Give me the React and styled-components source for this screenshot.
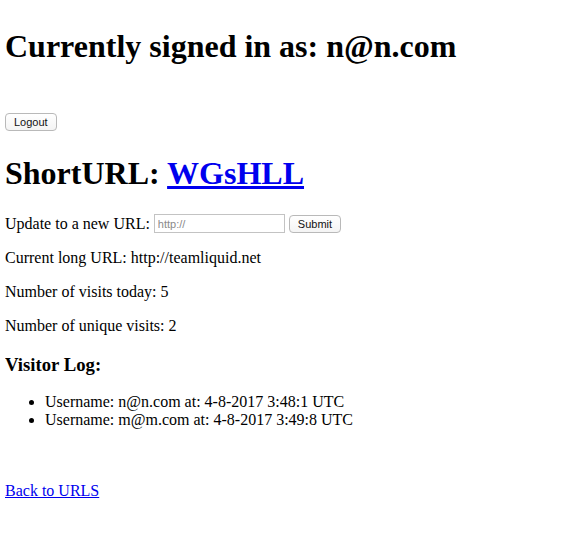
import React from 'react';
import styled, { createGlobalStyle } from 'styled-components';

const GlobalStyle = createGlobalStyle`
  body {
    margin: 7px 5px;
    background: #fff;
    color: #000;
    font-family: "Liberation Serif", "Times New Roman", serif;
    font-size: 16px;
  }
`;

const Title = styled.h1`
  font-size: 32px;
  font-weight: bold;
  margin: 21px 0;
  line-height: 37px;
`;

const LogoutForm = styled.form`
  margin: 0;
  padding: 26px 0 3px;
`;

const Button = styled.button`
  font-family: "Liberation Sans", Arial, sans-serif;
  font-size: 11px;
  height: 18px;
  padding: 0 8px;
  background: linear-gradient(#fff, #f4f4f4);
  border: 1px solid #b9b9b9;
  border-radius: 4px;
  color: #111;
  line-height: 14px;
  vertical-align: middle;
`;

const LinkText = styled.a`
  color: #0000ee;
  text-decoration: underline;
`;

const UpdateForm = styled.form`
  margin: 22px 0 16px;
  display: flex;
  align-items: center;
  gap: 4px;
  line-height: 18px;
`;

const UrlInput = styled.input`
  width: 131px;
  height: 19px;
  box-sizing: border-box;
  border: 1px solid #c3c3c3;
  padding: 1px 3px;
  font-family: "Liberation Sans", Arial, sans-serif;
  font-size: 11px;
  margin: 0;
  &::placeholder {
    color: #8a8a8a;
  }
`;

const Info = styled.p`
  margin: 16px 0;
  line-height: 18px;
`;

const SubTitle = styled.h3`
  font-size: 18.72px;
  margin: 19px 0 17px;
  line-height: 22px;
`;

const LogList = styled.ul`
  margin: 16px 0;
  padding-left: 40px;
  line-height: 18px;
`;

const BackRow = styled.div`
  padding-top: 37px;
  line-height: 18px;
`;

const visits = [
  { user: 'n@n.com', at: '4-8-2017 3:48:1 UTC' },
  { user: 'm@m.com', at: '4-8-2017 3:49:8 UTC' },
];

export default function App() {
  return (
    <>
      <GlobalStyle />
      <Title>Currently signed in as: n@n.com</Title>
      <LogoutForm onSubmit={(e) => e.preventDefault()}>
        <Button type="submit">Logout</Button>
      </LogoutForm>
      <Title>
        ShortURL: <LinkText href="#">WGsHLL</LinkText>
      </Title>
      <UpdateForm onSubmit={(e) => e.preventDefault()}>
        <span>Update to a new URL:</span>
        <UrlInput type="text" placeholder="http://" />
        <Button type="submit">Submit</Button>
      </UpdateForm>
      <Info>Current long URL: http://teamliquid.net</Info>
      <Info>Number of visits today: 5</Info>
      <Info>Number of unique visits: 2</Info>
      <SubTitle>Visitor Log:</SubTitle>
      <LogList>
        {visits.map((v) => (
          <li key={v.at}>
            Username: {v.user} at: {v.at}
          </li>
        ))}
      </LogList>
      <BackRow>
        <LinkText href="#">Back to URLS</LinkText>
      </BackRow>
    </>
  );
}
